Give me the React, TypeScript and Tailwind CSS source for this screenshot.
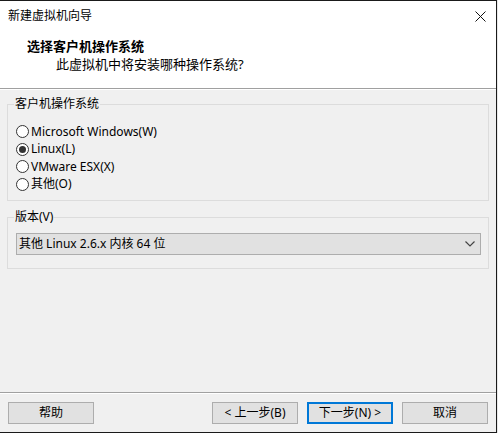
import { useState } from 'react'

const font = { fontFamily: '"Noto Sans", "Noto Sans CJK SC", sans-serif' }

const systems = [
    { id: 'win', label: 'Microsoft Windows(W)' },
    { id: 'linux', label: 'Linux(L)' },
    { id: 'esx', label: 'VMware ESX(X)' },
    { id: 'other', label: '其他(O)' },
]

function Radio({ checked, label, onClick }: { checked: boolean, label: string, onClick: () => void }) {
    return (
        <button onClick={onClick} className="flex items-center h-[17.5px] text-left">
            <span className="w-[13px] h-[13px] rounded-full border border-[#333] bg-white flex items-center justify-center">
                {checked && <span className="w-[7px] h-[7px] rounded-full bg-[#333]" />}
            </span>
            <span className="ml-[2px] text-[12px] leading-none text-black">{label}</span>
        </button>
    )
}

function Button({ children, primary }: { children: React.ReactNode, primary?: boolean }) {
    return (
        <button
            className={
                primary
                    ? "w-[86px] h-[22px] bg-[#e1e1e1] border-2 border-[#0078d7] text-[12px] leading-none text-black flex items-center justify-center"
                    : "w-[86px] h-[22px] bg-[#e1e1e1] border border-[#adadad] text-[12px] leading-none text-black flex items-center justify-center"
            }
        >
            {children}
        </button>
    )
}

export default function App() {
    const [os, setOs] = useState('linux')

    return (
        <div className="w-[498px] h-[433px] bg-[#e8e8e8]" style={font}>
            <div className="w-[497px] h-[433px] border-t border-r border-b border-[#1a1a1a] bg-[#f0f0f0] flex flex-col">
                {/* title bar */}
                <div className="h-[30px] bg-white flex items-center justify-between pl-[8px] pr-[10px]">
                    <span className="text-[12px] text-black">新建虚拟机向导</span>
                    <svg width="11" height="11" viewBox="0 0 11 11">
                        <path d="M0.5 0.5 L10.5 10.5 M10.5 0.5 L0.5 10.5" stroke="#111" strokeWidth="1" />
                    </svg>
                </div>

                {/* header */}
                <div className="h-[57px] bg-white pl-[27px] pt-[5px]">
                    <div className="text-[13px] font-bold leading-[20px] text-black">选择客户机操作系统</div>
                    <div className="text-[13px] leading-[16px] text-black pl-[29px]">此虚拟机中将安装哪种操作系统?</div>
                </div>
                <div className="h-px bg-[#a0a0a0]" />
                <div className="h-px bg-white" />

                {/* body */}
                <div className="flex-1 px-[7px] pt-[6px]">
                    <fieldset className="border border-[#dcdcdc] h-[105px] pl-[3px] pt-[11px]">
                        <legend className="ml-[3px] px-[1px] text-[12px] leading-[16px] text-black">客户机操作系统</legend>
                        <div className="flex flex-col pl-[5px]">
                            {systems.map(s => (
                                <Radio key={s.id} checked={os === s.id} label={s.label} onClick={() => setOs(s.id)} />
                            ))}
                        </div>
                    </fieldset>

                    <fieldset className="border border-[#dcdcdc] h-[60px] mt-[8px] pl-[3px] pr-[7px] pt-[8px]">
                        <legend className="ml-[3px] px-[1px] text-[12px] leading-[16px] text-black">版本(V)</legend>
                        <div className="ml-[5px] h-[22px] bg-[#e1e1e1] border border-[#adadad] flex items-center justify-between pl-[2px] pr-[5px]">
                            <span className="text-[12px] leading-none text-black">其他 Linux 2.6.x 内核 64 位</span>
                            <svg width="10" height="6" viewBox="0 0 10 6">
                                <path d="M0.5 0.5 L5 5 L9.5 0.5" stroke="#444" strokeWidth="1.2" fill="none" />
                            </svg>
                        </div>
                    </fieldset>
                </div>

                {/* footer */}
                <div className="h-px bg-[#a0a0a0]" />
                <div className="h-px bg-white" />
                <div className="h-[38px] flex items-start pt-[8px] px-[8px]">
                    <Button>帮助</Button>
                    <div className="flex-1" />
                    <div className="flex gap-[9px]">
                        <Button>&lt; 上一步(B)</Button>
                        <Button primary>下一步(N) &gt;</Button>
                        <Button>取消</Button>
                    </div>
                </div>
            </div>
        </div>
    )
}
